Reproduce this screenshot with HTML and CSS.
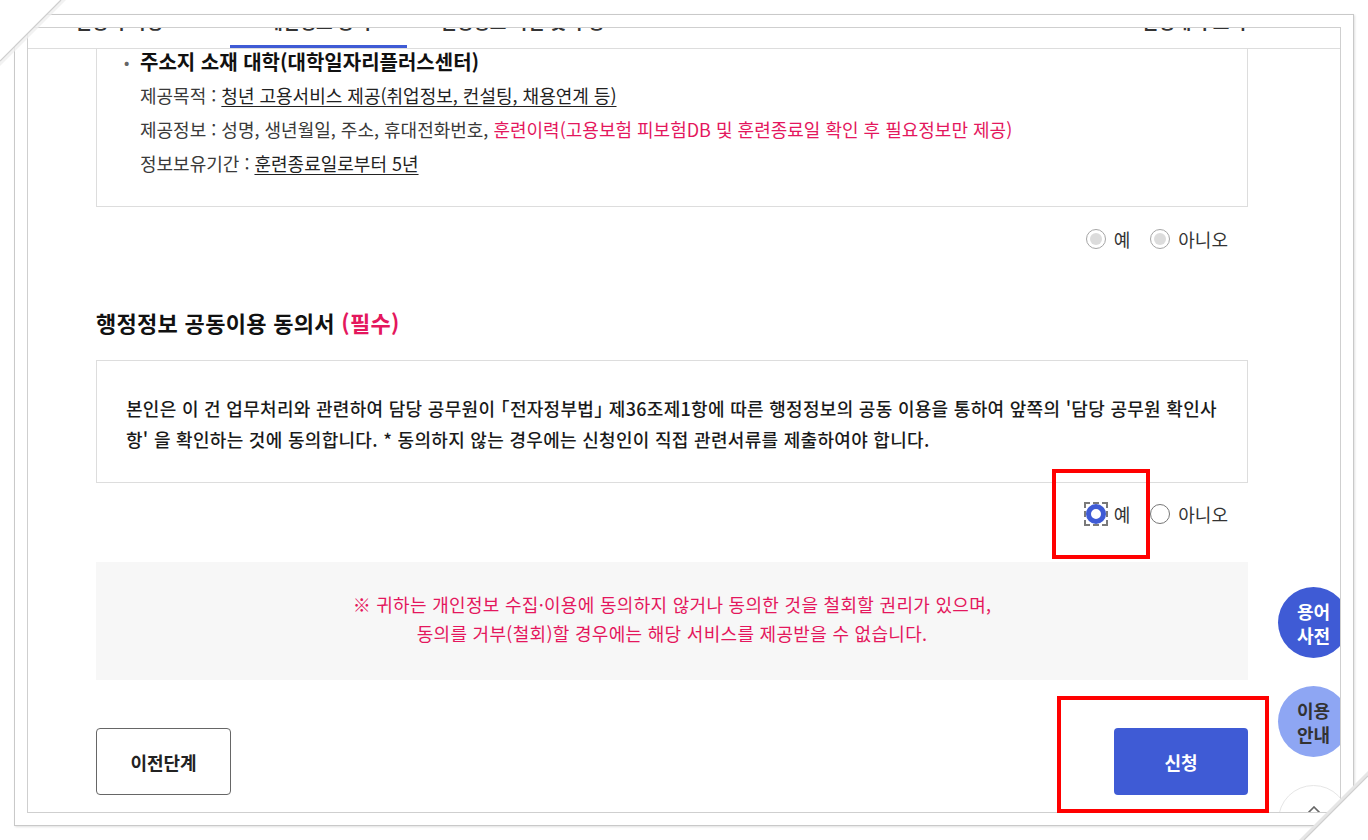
FILE: index.html
```html
<!DOCTYPE html>
<html lang="ko">
<head>
    <meta charset="utf-8">
    <title>행정정보 공동이용 동의</title>
    <link rel="stylesheet" href="styles.css">
</head>
<body>
    <div class="frame-outer">
        <div class="frame-inner">
            <ul class="tabs">
                <li class="tab tab-1"><span>신청서 작성</span></li>
                <li class="tab tab-2 active"><span>개인정보 동의</span></li>
                <li class="tab tab-3"><span>신청정보 확인 및 수정</span></li>
                <li class="tab tab-4"><span>신청내역 조회</span></li>
            </ul>

            <div class="content">
                <div class="agree-box first">
                    <p class="org"><span class="dot">•</span>주소지 소재 대학(대학일자리플러스센터)</p>
                    <ul class="info">
                        <li>제공목적 : <u>청년 고용서비스 제공(취업정보, 컨설팅, 채용연계 등)</u></li>
                        <li>제공정보 : 성명, 생년월일, 주소, 휴대전화번호, <span class="pink">훈련이력(고용보험 피보험DB 및 훈련종료일 확인 후 필요정보만 제공)</span></li>
                        <li>정보보유기간 : <u>훈련종료일로부터 5년</u></li>
                    </ul>
                </div>
                <div class="radio-row row-1">
                    <label class="radio"><span class="mark disabled"></span>예</label>
                    <label class="radio"><span class="mark disabled"></span>아니오</label>
                </div>

                <h3 class="sec-title">행정정보 공동이용 동의서 <span class="pink">(필수)</span></h3>
                <div class="agree-box second">
                    <p>본인은 이 건 업무처리와 관련하여 담당 공무원이 「전자정부법」 제36조제1항에 따른 행정정보의 공동 이용을 통하여 앞쪽의 '담당 공무원 확인사항' 을 확인하는 것에 동의합니다. * 동의하지 않는 경우에는 신청인이 직접 관련서류를 제출하여야 합니다.</p>
                </div>
                <div class="radio-row row-2">
                    <label class="radio"><span class="focus"><span class="mark checked"></span></span>예</label>
                    <label class="radio"><span class="mark"></span>아니오</label>
                </div>

                <div class="notice">
                    <p>※ 귀하는 개인정보 수집·이용에 동의하지 않거나 동의한 것을 철회할 권리가 있으며,</p>
                    <p>동의를 거부(철회)할 경우에는 해당 서비스를 제공받을 수 없습니다.</p>
                </div>

                <div class="btns">
                    <button class="btn btn-prev">이전단계</button>
                    <button class="btn btn-submit">신청</button>
                </div>
            </div>

            <div class="quick">
                <a class="quick-btn dict">용어<br>사전</a>
                <a class="quick-btn guide">이용<br>안내</a>
                <a class="quick-btn top"><svg width="14" height="8" viewBox="0 0 14 8"><path d="M1 7 L7 1 L13 7" fill="none" stroke="#666" stroke-width="1.6"/></svg></a>
            </div>
        </div>
    </div>

    <!-- red highlight marks on the capture -->
    <div class="mark-box mark-radio"></div>
    <div class="mark-box mark-submit"></div>

    <!-- page curl corners of the capture -->
    <svg class="curl curl-tl" width="70" height="70" viewBox="0 0 70 70">
        <defs>
            <linearGradient id="sh1" x1="0" y1="0" x2="1" y2="1">
                <stop offset="0" stop-color="#fff"/>
                <stop offset="1" stop-color="#ddd"/>
            </linearGradient>
        </defs>
        <polygon points="0,0 61,0 0,61" fill="#fff"/>
        <polygon points="61,0 66,0 0,66 0,61" fill="url(#sh1)" opacity="0.8"/>
        <line x1="61" y1="0" x2="0" y2="61" stroke="#cfcfcf" stroke-width="1.2"/>
    </svg>
    <svg class="curl curl-br" width="70" height="70" viewBox="0 0 70 70">
        <polygon points="70,6 70,70 6,70" fill="#fff"/>
        <polygon points="70,1 70,6 6,70 1,70" fill="#e6e6e6"/>
        <line x1="70" y1="6" x2="6" y2="70" stroke="#cfcfcf" stroke-width="1.2"/>
    </svg>
</body>
</html>
```

FILE: styles.css
```css
body {
    margin: 0;
    padding: 14px 0 0 14px;
    width: 1368px;
    height: 840px;
    box-sizing: border-box;
    overflow: hidden;
    background: #fff;
    font-family: "Noto Sans CJK KR", "Noto Sans", sans-serif;
    color: #222;
    position: relative;
}
.frame-outer {
    width: 1340px;
    height: 812px;
    box-sizing: border-box;
    border: 1px solid #c9c9c9;
    box-shadow: 1px 1px 2px rgba(0,0,0,0.12);
    padding: 12px;
}
.frame-inner {
    height: 786px;
    box-sizing: border-box;
    border: 1px solid #cfcfcf;
    overflow: hidden;
    position: relative;
}

/* top tabs, mostly scrolled out of view */
.tabs {
    list-style: none;
    margin: 0;
    padding: 0 0 0 47px;
    height: 20px;
    display: flex;
    border-bottom: 1px solid #ddd;
    overflow: hidden;
}
.tab span {
    display: block;
    margin-top: -17px;
    font-size: 18px;
    font-weight: bold;
    line-height: 20px;
    color: #333;
    white-space: nowrap;
}
.tab-1 {
    width: 90px;
}
.tab-2 {
    width: 177px;
    margin-left: 65px;
    text-align: center;
    box-sizing: border-box;
    border-bottom: 3px solid #3f5bd5;
}
.tab-3 {
    margin-left: 33px;
}
.tab-4 {
    margin-left: auto;
    margin-right: 94px;
}

.content {
    width: 1152px;
    margin-left: 68px;
}
.pink {
    color: #e4175d;
}

.agree-box {
    border: 1px solid #ddd;
    background: #fff;
}
.agree-box.first {
    border-top: none;
    padding: 0 30px 26px 27px;
}
.org {
    margin: 0;
    font-size: 20px;
    font-weight: bold;
    line-height: 26px;
    color: #111;
}
.org .dot {
    display: inline-block;
    width: 16px;
    color: #666;
    font-size: 14px;
    vertical-align: top;
}
.info {
    list-style: none;
    margin: 3px 0 0 16px;
    padding: 0;
    font-size: 18px;
    line-height: 34px;
    color: #3a3a3a;
}
.info u {
    color: #222;
    text-underline-offset: 3px;
}

.radio-row {
    display: flex;
    justify-content: flex-end;
    gap: 20px;
    padding-right: 20px;
    font-size: 18px;
    line-height: 24px;
    color: #333;
}
.row-1 {
    margin-top: 20px;
}
.row-2 {
    margin-top: 19px;
}
.radio {
    display: flex;
    align-items: center;
    gap: 8px;
}
.mark {
    width: 20px;
    height: 20px;
    box-sizing: border-box;
    border: 1px solid #777;
    border-radius: 50%;
    background: #fff;
    display: flex;
    align-items: center;
    justify-content: center;
}
.mark.disabled {
    border-color: #a5a5a5;
}
.mark.disabled::after {
    content: "";
    width: 12px;
    height: 12px;
    border-radius: 50%;
    background: #dcdcdc;
}
.mark.checked {
    border: 5px solid #3f5bd5;
}
.focus {
    display: flex;
    width: 20px;
    height: 20px;
    outline: 2px dashed #7a7a7a;
    outline-offset: 0;
}

.sec-title {
    margin: 56px 0 0;
    font-size: 22px;
    font-weight: bold;
    letter-spacing: 0.3px;
    line-height: 30px;
    color: #111;
}
.agree-box.second {
    margin-top: 23px;
    padding: 32px 28px 27px 29px;
}
.agree-box.second p {
    margin: 0;
    font-size: 18px;
    font-weight: 500;
    letter-spacing: 0.3px;
    line-height: 31px;
    color: #1a1a1a;
    font-feature-settings: "halt";
}

.notice {
    margin-top: 36px;
    padding: 28px 20px 32px;
    background: #f7f7f7;
    text-align: center;
    color: #e4175d;
    font-size: 18px;
    letter-spacing: 0.3px;
    line-height: 29px;
}
.notice p {
    margin: 0;
}

.btns {
    margin-top: 48px;
    display: flex;
    justify-content: space-between;
}
.btn {
    height: 67px;
    border-radius: 4px;
    font-family: inherit;
    font-size: 18px;
    font-weight: bold;
}
.btn-prev {
    width: 135px;
    background: #fff;
    border: 1px solid #666;
    color: #222;
}
.btn-submit {
    width: 134px;
    background: #3f5bd5;
    border: none;
    color: #fff;
}

/* floating quick menu */
.quick {
    position: absolute;
    left: 1250px;
    top: 559px;
    display: flex;
    flex-direction: column;
    gap: 28px;
}
.quick-btn {
    width: 71px;
    height: 71px;
    border-radius: 50%;
    display: flex;
    align-items: center;
    justify-content: center;
    text-align: center;
    font-size: 18px;
    font-weight: bold;
    line-height: 24px;
}
.quick-btn.dict {
    background: #3f5bd5;
    color: #fff;
}
.quick-btn.guide {
    background: #8ea6f3;
    color: #333;
}
.quick-btn.top {
    background: #fff;
    border: 1px solid #e6e6e6;
    box-sizing: border-box;
    align-items: flex-start;
    padding-top: 20px;
}

/* annotation boxes */
.mark-box {
    position: absolute;
    border: 4px solid #f00;
    box-sizing: border-box;
}
.mark-radio {
    left: 1052px;
    top: 469px;
    width: 98px;
    height: 90px;
}
.mark-submit {
    left: 1057px;
    top: 696px;
    width: 212px;
    height: 117px;
}

.curl {
    position: absolute;
}
.curl-tl {
    left: 0;
    top: 0;
}
.curl-br {
    left: 1298px;
    top: 770px;
}
```
